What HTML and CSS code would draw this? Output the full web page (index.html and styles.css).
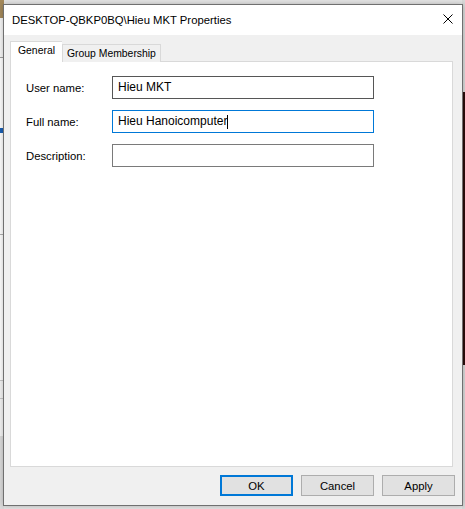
FILE: index.html
```html
<html>
<head>
<title>DESKTOP-QBKP0BQ\Hieu MKT Properties</title>
<meta charset="utf-8">
<link rel="stylesheet" href="styles.css">
</head>
<body>

<div class="desk">
  <div class="behind behind-left">
    <div class="pic"></div>
    <div class="sel"></div>
  </div>
  <div class="behind behind-right">
    <div class="dark"></div>
  </div>
</div>

<div class="dialog">
  <div class="titlebar">
    <span class="title">DESKTOP-QBKP0BQ\Hieu MKT Properties</span>
    <svg class="close" width="10" height="10" viewBox="0 0 10 10">
      <path d="M0.5 0.5 L9.5 9.5 M9.5 0.5 L0.5 9.5" stroke="#000" stroke-width="1" fill="none"/>
    </svg>
  </div>

  <div class="body">
    <div class="tabs">
      <div class="tab active">General</div>
      <div class="tab">Group Membership</div>
    </div>

    <div class="panel">
      <div class="row">
        <label>User name:</label>
        <div class="field dark-border">Hieu MKT</div>
      </div>
      <div class="row">
        <label>Full name:</label>
        <div class="field focus">Hieu Hanoicomputer<span class="caret"></span></div>
      </div>
      <div class="row">
        <label>Description:</label>
        <div class="field"></div>
      </div>
    </div>

    <div class="buttons">
      <button class="btn default">OK</button>
      <button class="btn">Cancel</button>
      <button class="btn">Apply</button>
    </div>
  </div>
</div>

</body>
</html>
```

FILE: styles.css
```css
body {
  margin: 0;
  width: 465px;
  height: 509px;
  overflow: hidden;
  position: relative;
  background: #e6e6e6;
  font-family: "Liberation Sans", Arial, sans-serif;
}

/* windows behind the dialog */

.desk {
  position: absolute;
  left: 0;
  top: 0;
  width: 465px;
  height: 509px;
}

.behind {
  position: absolute;
  top: 0;
  height: 509px;
}

.behind-left {
  left: 0;
  width: 4px;
  background: linear-gradient(#f7f7f7 0, #f7f7f7 57px, #a0a0a0 57px, #a0a0a0 58px,
                              #ffffff 58px, #ffffff 234px, #b0b0b0 234px, #b0b0b0 235px,
                              #ffffff 235px, #ffffff 380px, #c8c8c8 380px, #c8c8c8 381px,
                              #f4f4f4 381px, #f4f4f4 398px, #c8c8c8 398px, #c8c8c8 399px,
                              #f4f4f4 399px, #f4f4f4 436px, #dcdcdc 436px);
}

.behind-left .pic {
  height: 18px;
  background: #a58a5c;
}

.behind-left .sel {
  margin-top: 110px;
  height: 5px;
  background: #1a5fb4;
}

.behind-right {
  right: 0;
  width: 3px;
  background: #dadada;
}

.behind-right .dark {
  margin-top: 92px;
  height: 273px;
  background: #2a0d0b;
}

/* dialog */

.dialog {
  position: absolute;
  left: 3px;
  top: 4px;
  width: 460px;
  height: 502px;
  box-sizing: border-box;
  border: 1px solid #707070;
  background: #f0f0f0;
  display: flex;
  flex-direction: column;
  box-shadow: 0 0 6px rgba(0, 0, 0, 0.25);
}

.titlebar {
  height: 30px;
  background: #fff;
  display: flex;
  align-items: center;
  justify-content: space-between;
  padding: 0 9px 0 8px;
}

.title {
  font-size: 11.3px;
  color: #000;
  margin-top: -1px;
}

.close {
  margin-top: -2px;
}

.body {
  flex: 1;
  display: flex;
  flex-direction: column;
  padding: 7px 7px 8px 6px;
}

.tabs {
  display: flex;
  align-items: flex-end;
  height: 20px;
  margin-bottom: -1px;
  position: relative;
  z-index: 1;
}

.tab {
  font-size: 10.4px;
  color: #000;
  height: 17px;
  line-height: 17px;
  padding: 0 4px 0 4px;
  border: 1px solid #d9d9d9;
  border-bottom: none;
  background: #f0f0f0;
}

.tab.active {
  height: 20px;
  line-height: 18px;
  padding: 0 7px 0 7px;
  background: #fff;
  border-right: none;
}

.panel {
  width: 443px;
  height: 406px;
  box-sizing: border-box;
  background: #fff;
  border: 1px solid #d9d9d9;
  padding: 14px 0 0 15px;
  display: flex;
  flex-direction: column;
  gap: 11px;
}

.row {
  display: flex;
  align-items: center;
}

.row label {
  width: 86px;
  font-size: 11.3px;
  color: #000;
}

.field {
  width: 262px;
  height: 23px;
  box-sizing: border-box;
  border: 1px solid #7a7a7a;
  padding: 0 5px;
  font-size: 12px;
  line-height: 21px;
  color: #000;
  display: flex;
  align-items: center;
}

.field.dark-border {
  border-color: #565656;
}

.field.focus {
  border-color: #0078d7;
}

.caret {
  display: inline-block;
  width: 1px;
  height: 14px;
  background: #000;
}

.buttons {
  display: flex;
  justify-content: flex-end;
  gap: 8px;
  margin-top: 8px;
}

.btn {
  width: 73px;
  height: 21px;
  box-sizing: border-box;
  border: 1px solid #adadad;
  background: #e1e1e1;
  font-family: "Liberation Sans", Arial, sans-serif;
  font-size: 11.3px;
  color: #000;
  padding: 0;
}

.btn.default {
  border: 2px solid #0078d7;
}
```
